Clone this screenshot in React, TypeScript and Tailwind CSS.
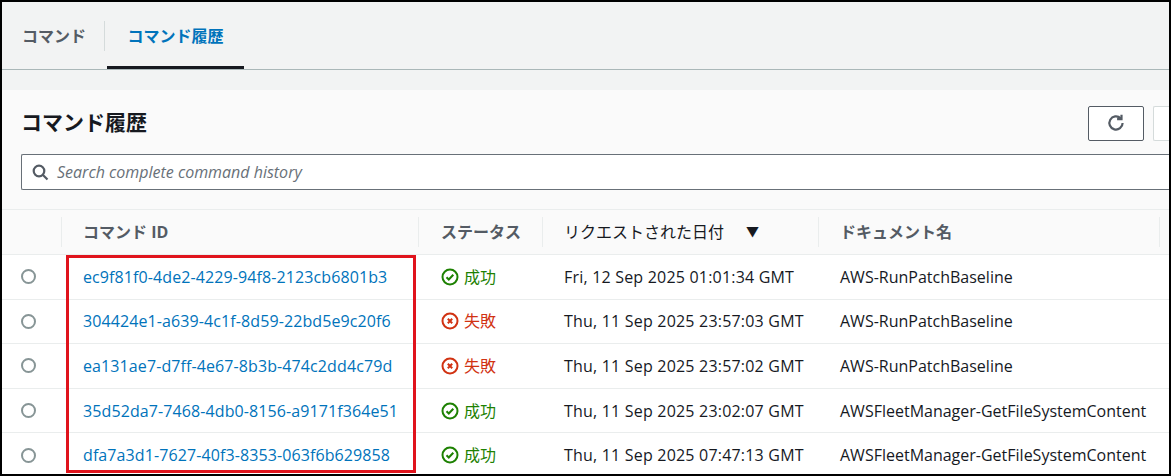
import React from 'react';

const rows = [
  { id: 'ec9f81f0-4de2-4229-94f8-2123cb6801b3', ok: true, date: 'Fri, 12 Sep 2025 01:01:34 GMT', doc: 'AWS-RunPatchBaseline' },
  { id: '304424e1-a639-4c1f-8d59-22bd5e9c20f6', ok: false, date: 'Thu, 11 Sep 2025 23:57:03 GMT', doc: 'AWS-RunPatchBaseline' },
  { id: 'ea131ae7-d7ff-4e67-8b3b-474c2dd4c79d', ok: false, date: 'Thu, 11 Sep 2025 23:57:02 GMT', doc: 'AWS-RunPatchBaseline' },
  { id: '35d52da7-7468-4db0-8156-a9171f364e51', ok: true, date: 'Thu, 11 Sep 2025 23:02:07 GMT', doc: 'AWSFleetManager-GetFileSystemContent' },
  { id: 'dfa7a3d1-7627-40f3-8353-063f6b629858', ok: true, date: 'Thu, 11 Sep 2025 07:47:13 GMT', doc: 'AWSFleetManager-GetFileSystemContent' },
];

function StatusIcon({ ok }: { ok: boolean }) {
  const c = ok ? '#1d8102' : '#d13212';
  return (
    <svg width="18" height="18" viewBox="0 0 18 18" fill="none" stroke={c} strokeWidth="2">
      <circle cx="9" cy="9" r="7.5" />
      {ok ? <path d="M5.5 9.2l2.3 2.3 4.5-4.7" /> : <path d="M6.8 6.8l4.4 4.4M11.2 6.8l-4.4 4.4" />}
    </svg>
  );
}

export default function App() {
  return (
    <div
      className="w-[1171px] h-[476px] overflow-hidden border-2 border-black bg-[#fafafa] text-[#16191f] flex flex-col"
      style={{ fontFamily: '"Open Sans", "Noto Sans CJK JP", sans-serif' }}
    >
      {/* Tabs */}
      <div className="h-[68px] shrink-0 bg-[#f2f3f3] border-b border-[#aab7b8] flex items-end px-[2px]">
        <div className="flex items-center h-full">
          <div className="px-[18px] text-[16px] font-bold text-[#545b64] border-r border-[#d5dbdb] h-[30px] flex items-center">コマンド</div>
          <div className="ml-[2px] h-full flex flex-col justify-center relative w-[137px] items-center">
            <span className="text-[16px] font-bold text-[#0073bb]">コマンド履歴</span>
            <div className="absolute bottom-0 left-0 right-0 h-[3px] bg-[#16191f]" />
          </div>
        </div>
      </div>
      <div className="h-[20px] shrink-0 bg-[#f2f3f3]" />

      {/* Panel */}
      <div className="flex-1 bg-[#fafafa] pl-[19px]">
        <div className="flex items-center justify-between h-[64px] pt-[2px]">
          <h2 className="text-[21px] font-bold">コマンド履歴</h2>
          <div className="flex gap-[9px] items-center">
            <button className="w-[56px] h-[35px] border border-[#545b64] rounded-[2px] bg-white flex items-center justify-center">
              <svg width="22" height="22" viewBox="0 0 20 20" fill="none" stroke="#545b64" strokeWidth="2">
                <path d="M16 10a6 6 0 1 1-1.8-4.3" />
                <path d="M15 2.5v4h-4" />
              </svg>
            </button>
            <div className="w-[16px] h-[35px] border border-r-0 border-[#d5dbdb] rounded-l-[2px] bg-white" />
          </div>
        </div>
        <div className="h-[36px] border border-[#687078] border-r-0 rounded-l-[2px] bg-white flex items-center px-[10px] gap-[8px]">
          <svg width="17" height="17" viewBox="0 0 17 17" fill="none" stroke="#545b64" strokeWidth="2.2">
            <circle cx="7" cy="7" r="5.3" />
            <path d="M11 11l4.5 4.5" />
          </svg>
          <span className="italic text-[16px] text-[#687078]">Search complete command history</span>
        </div>

        <div className="mt-[19px] -ml-[19px] bg-white">
          <div className="h-[46px] bg-[#fafafa] border-t border-b border-[#eaeded] flex items-center text-[16px] font-bold text-[#545b64]">
            <div className="w-[60px] h-[30px] border-r border-[#eaeded]" />
            <div className="w-[357px] pl-[21px] h-[30px] flex items-center border-r border-[#eaeded]">コマンド ID</div>
            <div className="w-[124px] pl-[22px] h-[30px] flex items-center border-r border-[#eaeded]">ステータス</div>
            <div className="w-[276px] pl-[21px] h-[30px] flex items-center border-r border-[#eaeded] font-normal text-[#16191f]">
              リクエストされた日付<span className="ml-[22px] text-[13px]">▼</span>
            </div>
            <div className="w-[341px] pl-[21px] h-[30px] flex items-center border-r border-[#eaeded]">ドキュメント名</div>
          </div>
          <div className="relative">
            {rows.map((r) => (
              <div key={r.id} className="h-[44.6px] border-b border-[#eaeded] flex items-center text-[16px]">
                <div className="w-[60px] flex justify-center">
                  <span className="w-[15px] h-[15px] rounded-full border-2 border-[#879596] bg-white -ml-[8px]" />
                </div>
                <div className="w-[357px] pl-[21px] text-[#0073bb] tracking-[0.1px]">{r.id}</div>
                <div className="w-[124px] pl-[22px] flex items-center gap-[5px]">
                  <StatusIcon ok={r.ok} />
                  <span className={r.ok ? 'text-[#1d8102]' : 'text-[#d13212]'}>{r.ok ? '成功' : '失敗'}</span>
                </div>
                <div className="w-[276px] pl-[21px] tracking-[0.2px]">{r.date}</div>
                <div className="pl-[21px]">{r.doc}</div>
              </div>
            ))}
            <div className="absolute left-[64px] top-[0px] w-[350px] h-[218px] border-[3px] border-[#e0131c] pointer-events-none" />
          </div>
        </div>
      </div>
    </div>
  );
}
